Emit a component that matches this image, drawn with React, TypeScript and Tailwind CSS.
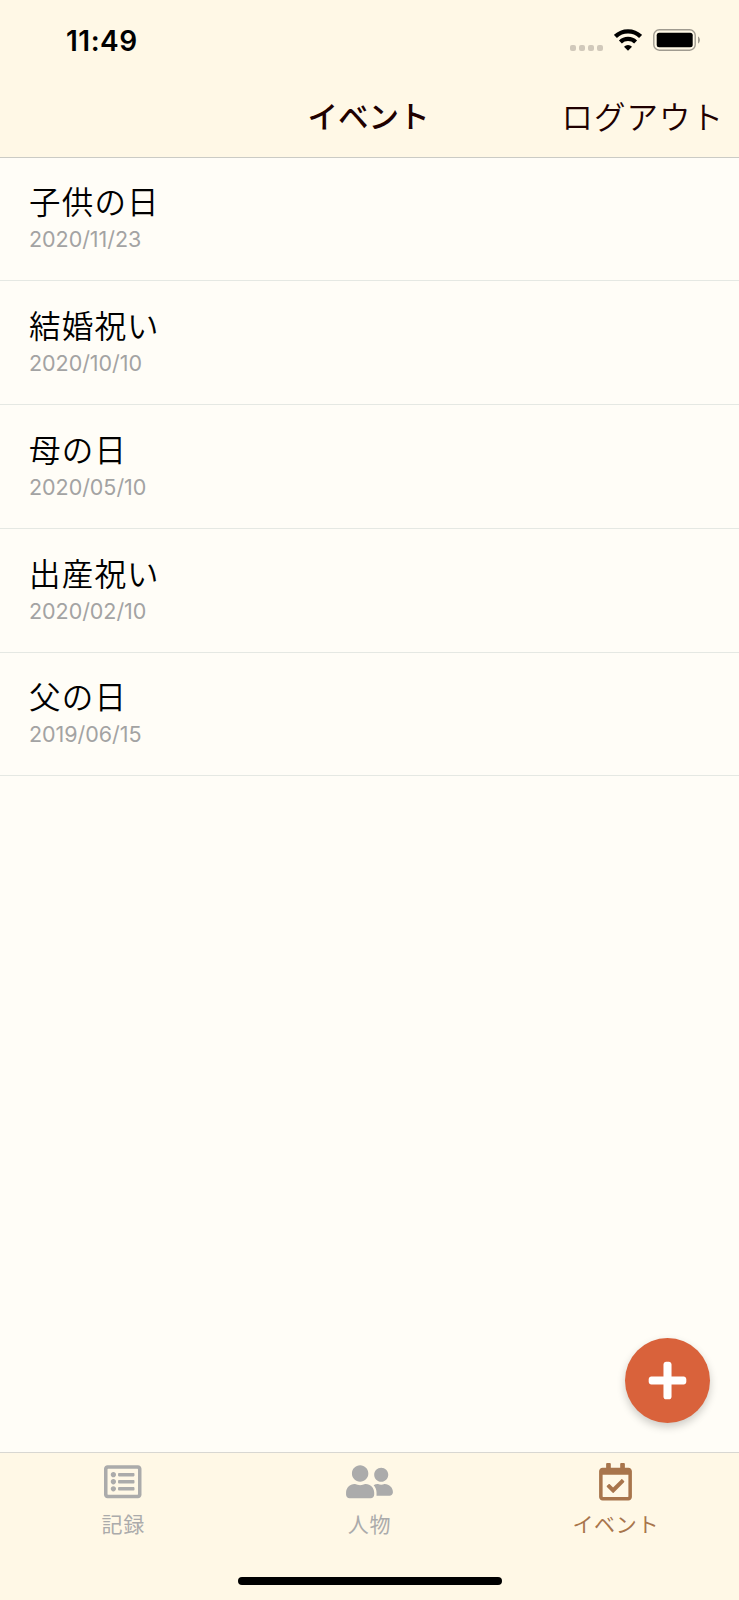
import { FaPlus, FaRegCalendarCheck, FaRegListAlt, FaUserFriends } from 'react-icons/fa';
import type { IconType } from 'react-icons';

interface EventItem {
  name: string;
  date: string;
}

interface TabItem {
  label: string;
  icon: IconType;
  iconWidth: string;
  active: boolean;
}

const events: EventItem[] = [
  { name: '子供の日', date: '2020/11/23' },
  { name: '結婚祝い', date: '2020/10/10' },
  { name: '母の日', date: '2020/05/10' },
  { name: '出産祝い', date: '2020/02/10' },
  { name: '父の日', date: '2019/06/15' },
];

const tabs: TabItem[] = [
  { label: '記録', icon: FaRegListAlt, iconWidth: 'w-[37.5px]', active: false },
  { label: '人物', icon: FaUserFriends, iconWidth: 'w-[47px]', active: false },
  { label: 'イベント', icon: FaRegCalendarCheck, iconWidth: 'w-[33px]', active: true },
];

function StatusBar() {
  return (
    <div className="flex h-20 items-center justify-between pl-[66px] pr-[38px]">
      <span className="pt-px text-[28px] font-semibold leading-none tracking-[0.5px] text-black">11:49</span>
      <div className="flex items-center">
        <div className="mr-[11px] mt-[15px] flex gap-[3px]">
          {[0, 1, 2, 3].map((dot) => (
            <span key={dot} className="h-1.5 w-1.5 rounded-[2px] bg-[#d1c9bb]" />
          ))}
        </div>
        <svg className="mr-[11px] h-[22px] w-7" viewBox="0 0 28 22" fill="none" stroke="#000">
          <path d="M1.4 7.4a18.2 18.2 0 0 1 25.2 0" strokeWidth="4.4" />
          <path d="M6.4 12.9a11 11 0 0 1 15.2 0" strokeWidth="4.2" />
          <path d="M10 17.7a5.8 5.8 0 0 1 8 0l-4 4z" fill="#000" stroke="none" />
        </svg>
        <svg className="h-[22px] w-[48px]" viewBox="0 0 48 22">
          <rect x="0.8" y="0.8" width="41.4" height="20.4" rx="5.5" fill="none" stroke="#a09b90" strokeWidth="1.4" />
          <rect x="3.7" y="3.7" width="36" height="14.6" rx="2.5" fill="#000" />
          <path d="M45 7.5c2.6 1.2 2.6 5.8 0 7z" fill="#a09b90" />
        </svg>
      </div>
    </div>
  );
}

function Header() {
  return (
    <header className="h-[157.6px] shrink-0 border-b border-[#cbcbc5] bg-[#fff8e6]">
      <StatusBar />
      <div className="grid h-[76px] grid-cols-3 items-center text-[#200000]">
        <span />
        <h1 className="pb-0.5 pr-0.5 text-center text-[30.5px] font-medium leading-none">イベント</h1>
        <button className="justify-self-end whitespace-nowrap pr-[15px] text-[31.5px] font-[350] leading-none tracking-[1px]">
          ログアウト
        </button>
      </div>
    </header>
  );
}

function EventRow({ name, date }: EventItem) {
  return (
    <li className="flex h-[123.75px] flex-col border-b border-[#e5e8e3] pl-[29px] pt-[29.9px]">
      <span className="text-[31.5px] font-[350] leading-8 tracking-[1.2px] text-black">{name}</span>
      <span className="mt-2 text-[21.5px] leading-6 tracking-[-0.05px] text-[#a3a3a3]">{date}</span>
    </li>
  );
}

function TabBar() {
  return (
    <nav className="h-[148px] shrink-0 border-t border-[#d8d7d2] bg-[#fff8e6]">
      <div className="grid h-[124px] grid-cols-3 pt-[10px]">
        {tabs.map(({ label, icon: Icon, iconWidth, active }) => (
          <div
            key={label}
            className={`flex flex-col items-center ${active ? 'text-[#a8754c]' : 'text-[#ababab]'}`}
          >
            <Icon className={`h-[37.5px] ${iconWidth}`} />
            <span className="mt-3 text-[21px] leading-6 tracking-[0.7px]">{label}</span>
          </div>
        ))}
      </div>
      <div className="mx-auto h-2 w-[264px] rounded-full bg-black" />
    </nav>
  );
}

export default function App() {
  return (
    <div className="relative flex h-[1600px] w-[739px] flex-col overflow-hidden bg-[#fffdf7] font-['Inter','Noto_Sans_CJK_JP',sans-serif]">
      <Header />
      <ul className="flex-1">
        {events.map((event) => (
          <EventRow key={event.name} {...event} />
        ))}
      </ul>
      <TabBar />
      <button className="absolute bottom-[177px] right-[29px] flex h-[85.5px] w-[85.5px] items-center justify-center rounded-full bg-[#d9623b] text-white shadow-[0_4px_8px_rgba(0,0,0,0.2)]">
        <FaPlus className="h-[43px] w-[43px]" />
      </button>
    </div>
  );
}
